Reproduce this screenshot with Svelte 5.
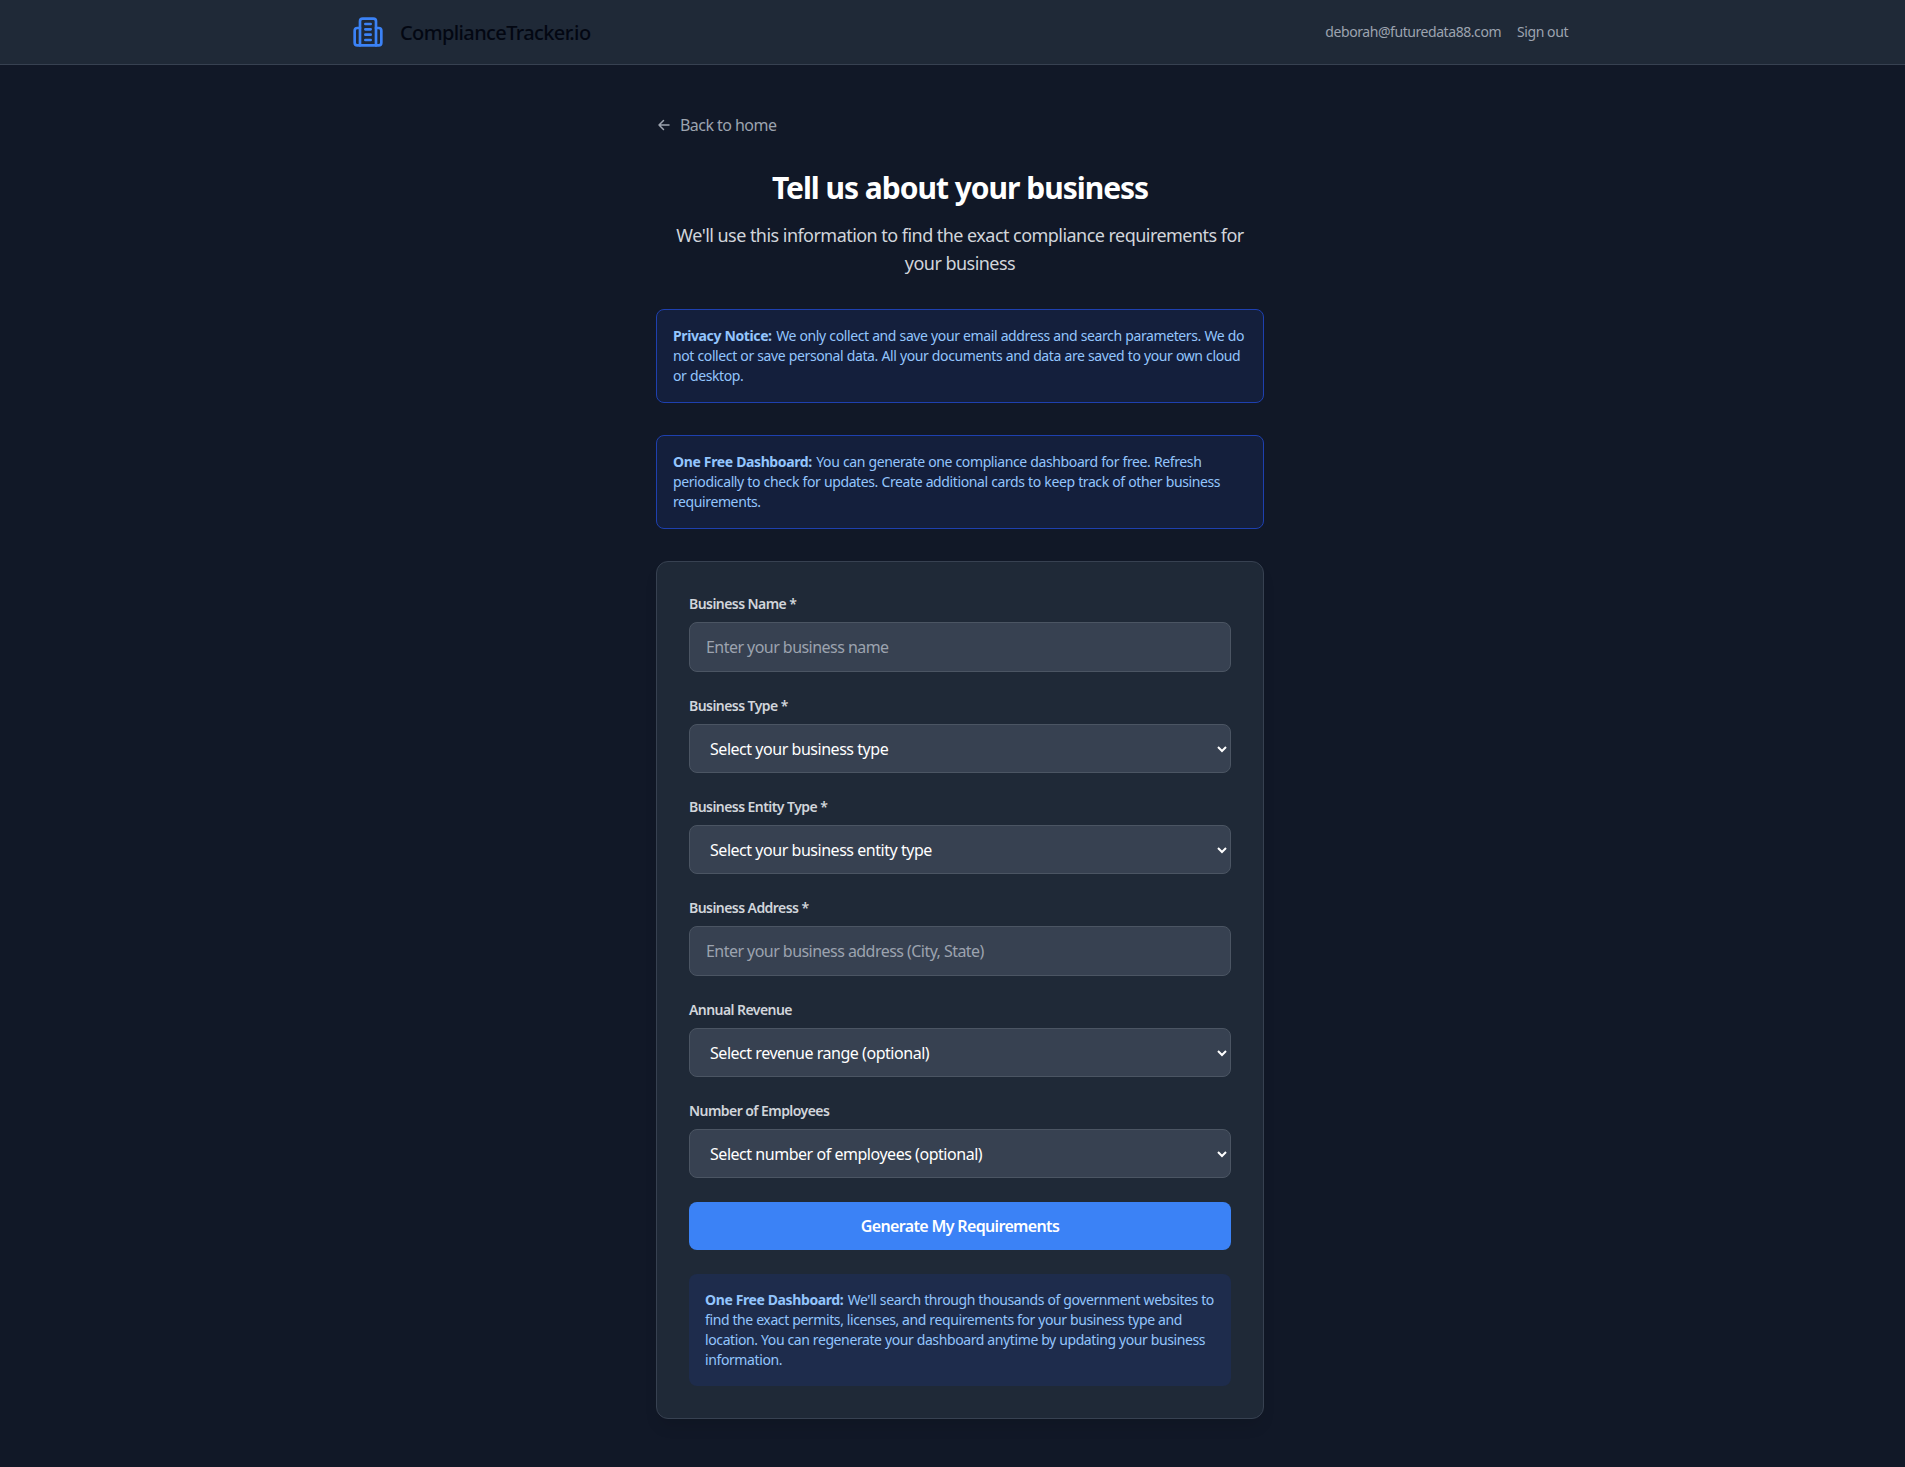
<script lang="ts">
  interface Field {
    label: string;
    kind: "input" | "select";
    text: string;
  }

  const fields: Field[] = [
    { label: "Business Name *", kind: "input", text: "Enter your business name" },
    { label: "Business Type *", kind: "select", text: "Select your business type" },
    { label: "Business Entity Type *", kind: "select", text: "Select your business entity type" },
    { label: "Business Address *", kind: "input", text: "Enter your business address (City, State)" },
    { label: "Annual Revenue", kind: "select", text: "Select revenue range (optional)" },
    { label: "Number of Employees", kind: "select", text: "Select number of employees (optional)" },
  ];
</script>

<div class="page">
  <header class="topbar">
    <div class="topbar__inner">
      <div class="brand">
        <svg class="brand__icon" viewBox="0 0 24 24" fill="none" stroke="currentColor" stroke-width="2" stroke-linecap="round" stroke-linejoin="round" aria-hidden="true">
          <path d="M6 22V4a2 2 0 0 1 2-2h8a2 2 0 0 1 2 2v18Z" />
          <path d="M6 9H4a2 2 0 0 0-2 2v9a2 2 0 0 0 2 2h2" />
          <path d="M18 9h2a2 2 0 0 1 2 2v9a2 2 0 0 1-2 2h-2" />
          <path d="M10 6h4M10 10h4M10 14h4M10 18h4" />
        </svg>
        <span class="brand__name">ComplianceTracker.io</span>
      </div>
      <nav class="account">
        <span>deborah@futuredata88.com</span>
        <a href="#signout">Sign out</a>
      </nav>
    </div>
  </header>

  <main class="main">
    <a class="back" href="#home">
      <svg viewBox="0 0 16 16" fill="none" stroke="currentColor" stroke-width="1.500" stroke-linecap="round" stroke-linejoin="round" aria-hidden="true">
        <path d="M13 8H3M7.500 3.500 3 8l4.500 4.500" />
      </svg>
      Back to home
    </a>

    <h1 class="title">Tell us about your business</h1>
    <p class="subtitle">We'll use this information to find the exact compliance requirements for your business</p>

    <div class="notice">
      <strong>Privacy Notice:</strong> We only collect and save your email address and search parameters. We do not collect or save personal data. All your documents and data are saved to your own cloud or desktop.
    </div>
    <div class="notice">
      <strong>One Free Dashboard:</strong> You can generate one compliance dashboard for free. Refresh periodically to check for updates. Create additional cards to keep track of other business requirements.
    </div>

    <form class="card">
      {#each fields as field}
        <div class="field">
          <label class="field__label" for={field.label}>{field.label}</label>
          {#if field.kind === "input"}
            <input class="field__input" id={field.label} type="text" placeholder={field.text} />
          {:else}
            <select class="field__select" id={field.label}>
              <option>{field.text}</option>
            </select>
          {/if}
        </div>
      {/each}

      <button class="submit" type="button">Generate My Requirements</button>

      <div class="info">
        <strong>One Free Dashboard:</strong> We'll search through thousands of government websites to find the exact permits, licenses, and requirements for your business type and location. You can regenerate your dashboard anytime by updating your business information.
      </div>
    </form>
  </main>
</div>

<style>
  :global(html),
  :global(body) {
    margin: 0;
    background: #111827;
    overflow-x: hidden;
  }

  .page {
    width: 1920px;
    min-height: 1467px;
    background: #111827;
    font-family: "Noto Sans", "Open Sans", sans-serif;
    letter-spacing: -0.028em;
    color: #d1d5db;
  }

  .topbar {
    height: 64px;
    background: #1f2937;
    border-bottom: 1px solid #374151;
  }

  .topbar__inner {
    box-sizing: border-box;
    max-width: 1280px;
    height: 100%;
    margin: 0 auto;
    padding: 0 32px;
    display: flex;
    align-items: center;
    justify-content: space-between;
  }

  .brand {
    display: flex;
    align-items: center;
    gap: 16px;
  }

  .brand__icon {
    width: 32px;
    height: 32px;
    color: #3b82f6;
  }

  .brand__name {
    padding-top: 2px;
    font-size: 20px;
    line-height: 28px;
    font-weight: 500;
    letter-spacing: -0.031em;
    color: #030712;
  }

  .account {
    display: flex;
    gap: 16px;
    font-size: 14px;
    line-height: 20px;
    letter-spacing: -0.031em;
    color: #9ca3af;
  }

  .account a {
    color: inherit;
    text-decoration: none;
  }

  .main {
    box-sizing: border-box;
    max-width: 672px;
    margin: 0 auto;
    padding: 48px 32px;
  }

  .back {
    display: inline-flex;
    align-items: center;
    gap: 8px;
    margin-bottom: 32px;
    font-size: 16px;
    line-height: 24px;
    letter-spacing: -0.034em;
    color: #9ca3af;
    text-decoration: none;
  }

  .back svg {
    width: 16px;
    height: 16px;
  }

  .title {
    margin: 0 0 16px;
    padding-top: 2px;
    text-align: center;
    font-size: 30px;
    line-height: 34px;
    font-weight: 700;
    letter-spacing: -0.034em;
    color: #fff;
  }

  .subtitle {
    margin: 0 0 32px;
    padding: 0 8px;
    text-align: center;
    font-size: 18px;
    line-height: 28px;
    letter-spacing: -0.03em;
    color: #d1d5db;
  }

  .notice {
    margin-bottom: 32px;
    padding: 16px;
    background: #141f3c;
    border: 1px solid #1e40af;
    border-radius: 8px;
    font-size: 14px;
    line-height: 20px;
    letter-spacing: -0.028em;
    word-spacing: 0.25px;
    color: #93c5fd;
  }

  .notice strong,
  .info strong {
    margin-right: 1px;
    letter-spacing: -0.028em;
  }

  .card {
    padding: 32px;
    background: #1f2937;
    border: 1px solid #374151;
    border-radius: 12px;
    box-shadow: 0 10px 15px -3px rgb(0 0 0 / 0.1);
  }

  .field {
    margin-bottom: 24px;
  }

  .field__label {
    display: block;
    margin-bottom: 8px;
    font-size: 14px;
    line-height: 20px;
    font-weight: 600;
    letter-spacing: -0.04em;
    color: #d1d5db;
  }

  .field__input,
  .field__select {
    box-sizing: border-box;
    display: block;
    width: 100%;
    background-color: #374151;
    border: 1px solid #4b5563;
    border-radius: 8px;
    font-family: inherit;
    font-size: 16px;
    color: #fff;
  }

  .field__input {
    height: 50px;
    padding: 12px 16px;
    line-height: 24px;
    letter-spacing: -0.034em;
  }

  .field__input::placeholder {
    color: #9ca3af;
    opacity: 1;
  }

  .field__select {
    appearance: none;
    -webkit-appearance: none;
    height: 49px;
    padding: 0 32px 0 20px;
    letter-spacing: -0.029em;
    background-image: url("data:image/svg+xml,%3Csvg xmlns='http://www.w3.org/2000/svg' viewBox='0 0 10 8' fill='none'%3E%3Cpath d='M1 2 5 6 9 2' stroke='white' stroke-width='2'/%3E%3C/svg%3E");
    background-repeat: no-repeat;
    background-size: 10px 8px;
    background-position: right 3px center;
  }

  .submit {
    display: block;
    width: 100%;
    height: 48px;
    background: #3b82f6;
    border: 0;
    border-radius: 8px;
    font-family: inherit;
    font-size: 16px;
    font-weight: 600;
    letter-spacing: -0.041em;
    color: #fff;
  }

  .info {
    margin-top: 24px;
    padding: 16px;
    background: #1e2c4c;
    border-radius: 8px;
    font-size: 14px;
    line-height: 20px;
    letter-spacing: -0.028em;
    word-spacing: 0.05px;
    color: #93c5fd;
  }
</style>
